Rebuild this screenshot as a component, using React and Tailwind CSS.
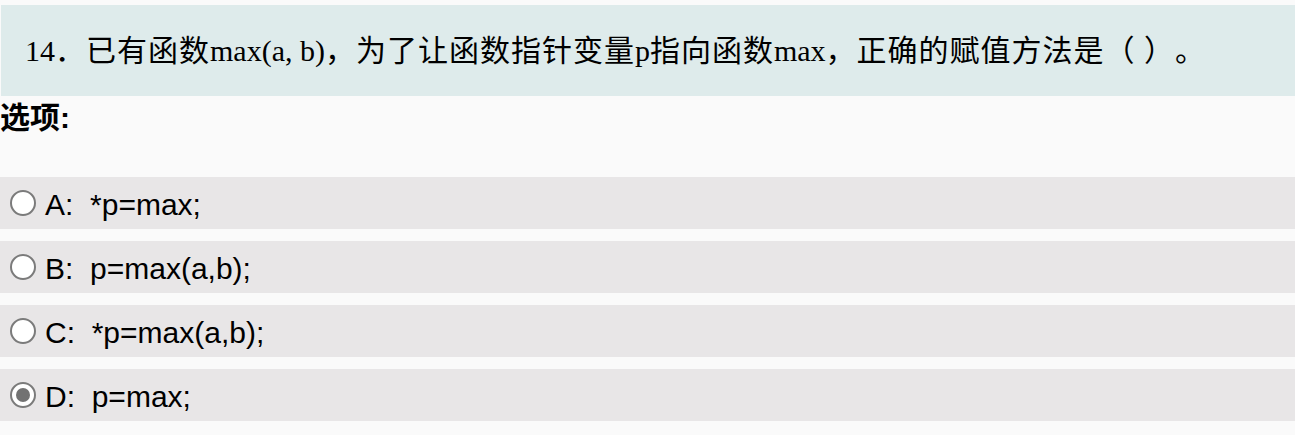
import React from "react";

const options = [
  { key: "A", text: "*p=max;", checked: false },
  { key: "B", text: "p=max(a,b);", checked: false },
  { key: "C", text: "*p=max(a,b);", checked: false },
  { key: "D", text: "p=max;", checked: true },
];

function Radio({ checked }) {
  return (
    <span className="flex h-[26px] w-[26px] shrink-0 items-center justify-center rounded-full border-2 border-[#7b7b7b] bg-white">
      {checked && <span className="h-[14px] w-[14px] rounded-full bg-[#727272]" />}
    </span>
  );
}

export default function App() {
  return (
    <div className="min-h-[435px] w-[1295px] bg-[#fafafa] pt-[5px]">
      <div
        className="ml-[1px] flex h-[91px] items-center bg-[#deebeb] pl-[24px] text-[30px] text-black [text-spacing-trim:space-all]"
        style={{ fontFamily: '"Liberation Serif", "Noto Sans CJK SC", serif' }}
      >
        <span className="leading-none">
          14
          <span className="tracking-[1px]">．已有函数</span>
          max(a, b)
          <span className="tracking-[1px]">，为了让函数指针变量</span>
          p
          <span className="tracking-[1px]">指向函数</span>
          max
          <span className="tracking-[1px]">，正确的赋值方法是（ ）。</span>
        </span>
      </div>
      <div
        className="h-[81px] pt-[2px] text-[30px] font-bold leading-[40px] text-black"
        style={{ fontFamily: '"Liberation Sans", "Noto Sans CJK SC", sans-serif' }}
      >
        选项:
      </div>
      <div className="flex flex-col gap-[12px]">
        {options.map((o) => (
          <div
            key={o.key}
            className="flex h-[52px] items-center bg-[#e8e6e7] pl-[10px] text-[30px] text-black"
            style={{ fontFamily: '"Liberation Sans", "Noto Sans CJK SC", sans-serif' }}
          >
            <Radio checked={o.checked} />
            <span className="ml-[9px] whitespace-pre pt-[3px] leading-none">{o.key}:  {o.text}</span>
          </div>
        ))}
      </div>
    </div>
  );
}
